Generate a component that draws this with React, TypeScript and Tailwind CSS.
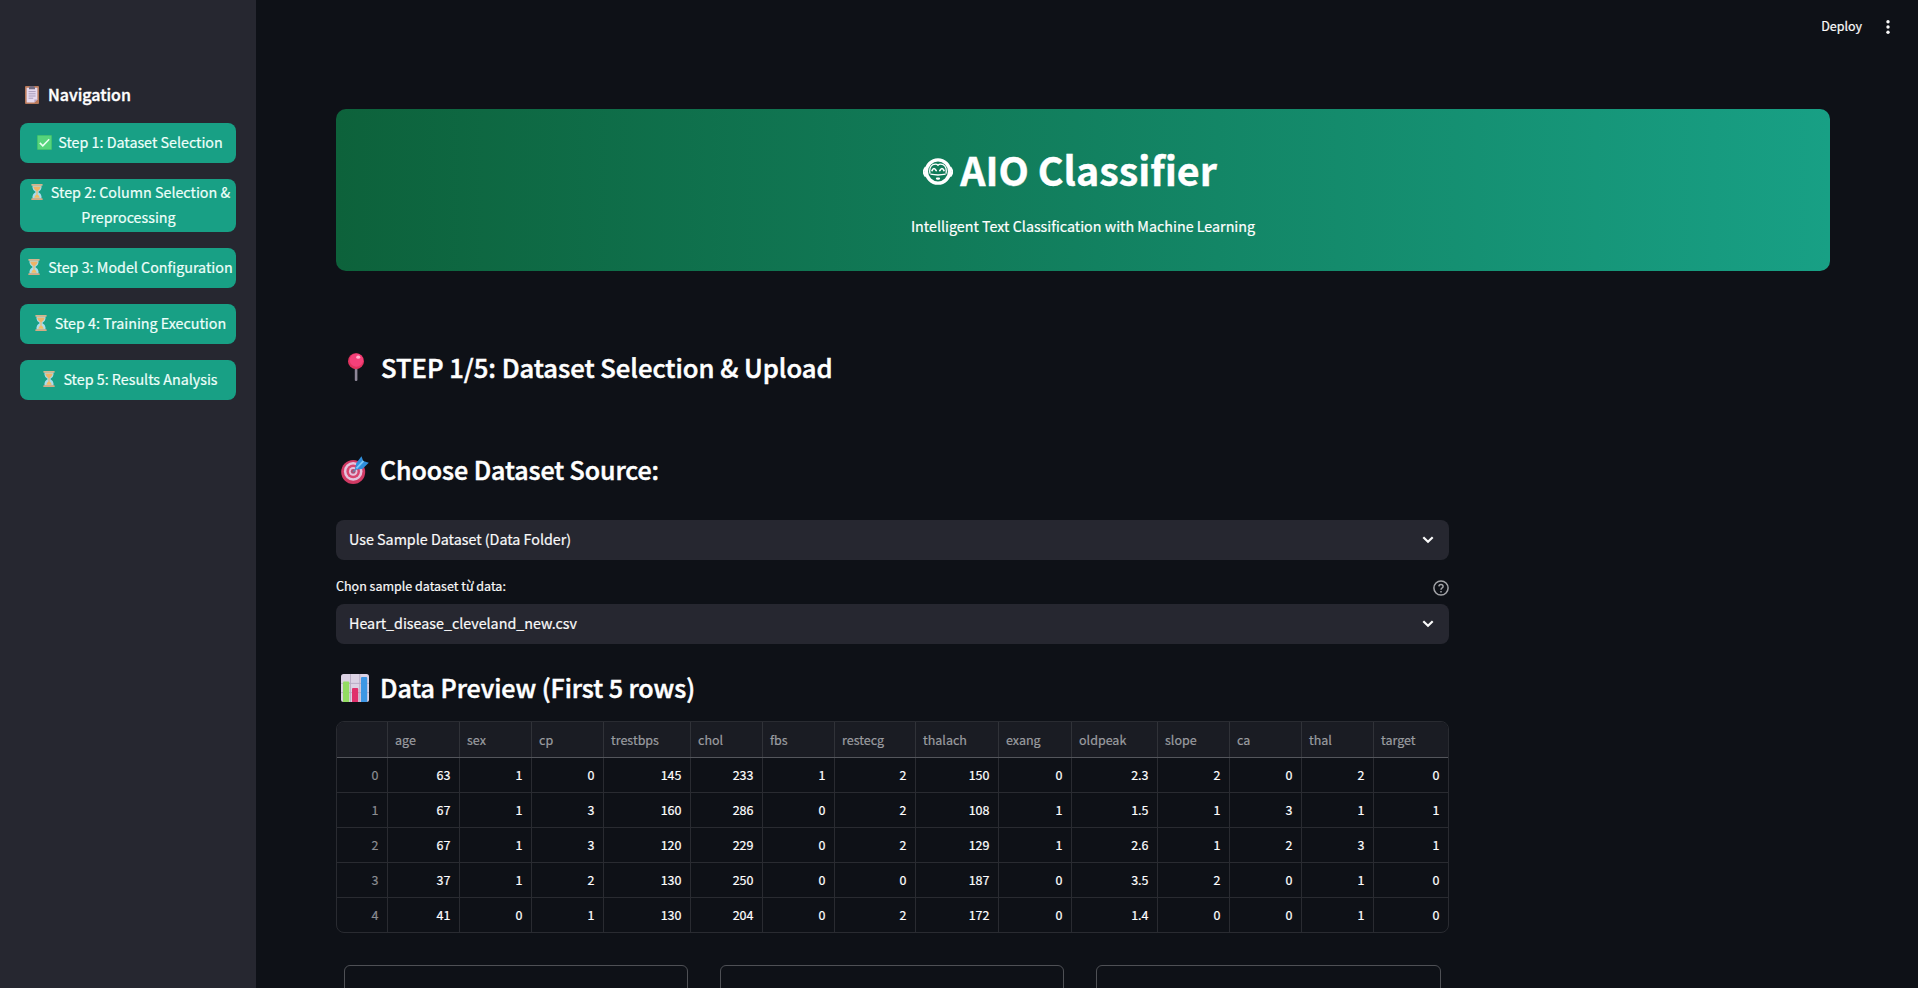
import type { ReactNode } from "react";

function Clipboard({ className }: { className: string }) {
  return (
    <svg viewBox="0 0 14 18" className={className}>
      <rect width="14" height="18" rx="1" fill="#b8795a" />
      <path d="M1.6 1.8h10.8v11.7l-3 3H1.6z" fill="#e6d9ee" />
      <path d="M9.4 16.5v-3h3z" fill="#b9a3c8" />
      <path d="M4 1.2Q4.4 0 7 0t3 1.2V3.2H4z" fill="#6f6a80" />
      <path d="M3.6 5.6h7M3.6 7.8h7M3.6 10h7M3.6 12.2h4.6" stroke="#a294b5" strokeWidth=".9" />
    </svg>
  );
}

function Check() {
  return (
    <svg viewBox="0 0 16 16" className="h-[15px] w-[15px]">
      <rect width="16" height="16" rx="1" fill="#3fbf6f" />
      <rect x="1" y="1" width="14" height="14" fill="#56d47c" />
      <path d="M3 8.4l3.2 3.2L13 4.6" fill="none" stroke="#e9fff2" strokeWidth="1.6" />
    </svg>
  );
}

function Hourglass() {
  return (
    <svg viewBox="0 0 12 16" className="h-4 w-3">
      <path d="M1.5 1.2h9v2.6Q10.5 6 7.3 8q3.2 2 3.2 4.2v2.6h-9v-2.6Q1.5 10 4.7 8 1.5 6 1.5 3.8z" fill="#a9dcec" />
      <path d="M2.2 2.4h7.6Q9.4 5.6 6 7.3 2.6 5.6 2.2 2.4z" fill="#eeb468" />
      <path d="M6 7v4" stroke="#f2b25c" strokeWidth="1" />
      <path d="M3.2 13.8Q3.8 11 6 10.6q2.2.4 2.8 3.2z" fill="#f4bd63" />
      <rect x=".3" y="0" width="11.4" height="1.7" rx=".6" fill="#d6b48c" />
      <rect x=".3" y="14.3" width="11.4" height="1.7" rx=".6" fill="#d6a983" />
    </svg>
  );
}

function Pin() {
  return (
    <svg viewBox="0 0 16 28" className="h-7 w-4">
      <rect x="6.8" y="14" width="2.6" height="14" rx="1" fill="#8e8798" />
      <circle cx="8" cy="8.2" r="8" fill="#e2335f" />
      <circle cx="8.4" cy="7.2" r="6.6" fill="#f5407a" />
      <ellipse cx="10.2" cy="4.2" rx="2" ry="1.6" fill="#ffb3cd" />
    </svg>
  );
}

function Target() {
  return (
    <svg viewBox="0 0 28 28" className="h-7 w-7">
      <circle cx="12.2" cy="16" r="12" fill="#d13a64" />
      <circle cx="12.2" cy="15.4" r="9.3" fill="#e4c3dd" />
      <circle cx="12.2" cy="15.4" r="6.8" fill="#d8456f" />
      <circle cx="12.2" cy="15.4" r="4.3" fill="#e4c3dd" />
      <circle cx="12.2" cy="15.4" r="2.4" fill="#b3496f" />
      <path d="M12 16l9-9" stroke="#6a7fa6" strokeWidth="1.6" />
      <path d="M14 13.5l1.2-6.2L20.5.3l1.7 4.8 5.6 1.6-6.5 6.3z" fill="#2f8fdc" />
      <path d="M15.5 12.3l7-7.4" stroke="#7cc8f7" strokeWidth="1.8" />
    </svg>
  );
}

function BarChart() {
  return (
    <svg viewBox="0 0 28 28" className="h-7 w-7">
      <rect width="28" height="28" rx="2.5" fill="#dcd2e4" />
      <path d="M9.5 0v28M18.8 0v28M0 9.4h28M0 18.6h28" stroke="#b6a9c2" strokeWidth=".9" />
      <path d="M2 8.5q0-1 1-1h4.2q1 0 1 1V28H2.5q-.5 0-.5-.5z" fill="#93dc62" />
      <path d="M11 15q0-1 1-1h4.2q1 0 1 1v13H11z" fill="#e0316c" />
      <path d="M20 4q0-1 1-1h4.2q1 0 1 1v23.5q0 .5-.5.5H20z" fill="#3e97e4" />
    </svg>
  );
}

function Face() {
  return (
    <svg viewBox="0 0 30 27" className="h-[27px] w-[30px]" fill="none" stroke="#fff">
      <circle cx="15" cy="13.5" r="11.6" strokeWidth="3.4" />
      <path d="M2.8 9Q.8 11.5.8 13.8t2 4.7M27.2 9q2 2.5 2 4.8t-2 4.7" strokeWidth="2" />
      <path d="M7 15.6Q5.8 9 9.8 6.7q3.600-1.300 5.200.5 1.600-1.800 5.200-.5Q24.200 9 23 15.600" strokeWidth="1.3" />
      <path d="M9 12.6q1.900-4.200 4.200 0M16.800 12.600q2.300-4.200 4.200 0" strokeWidth="1.7" strokeLinecap="round" />
      <path d="M7.4 16.2q7.600 1.600 15.200 0" strokeWidth="1.3" />
      <path d="M14 20.6h2" strokeWidth="2.2" strokeLinecap="round" />
    </svg>
  );
}

function Chevron() {
  return (
    <svg viewBox="0 0 12 8" className="h-2 w-3" fill="none" stroke="#fafafa" strokeWidth="2.2">
      <path d="M1.3 1.2L6 5.8l4.7-4.6" />
    </svg>
  );
}

function NavButton({ done, children }: { done?: boolean; children: ReactNode }) {
  return (
    <button className="flex min-h-10 w-[216px] items-center justify-center rounded-lg bg-[#18a085] text-[14.3px] leading-[25.6px] whitespace-nowrap text-[#eefffa]">
      <span className="mb-[2px] block pl-px text-center">
        <span className="mr-[4px] inline-flex h-4 w-5 items-center justify-center align-[-2px]">
          {done ? <Check /> : <Hourglass />}
        </span>
        {children}
      </span>
    </button>
  );
}

function Heading({ icon, className, children }: { icon: ReactNode; className: string; children: ReactNode }) {
  return (
    <h2 className={"flex h-9 items-center font-medium text-white [-webkit-text-stroke:0.5px_white] " + className}>
      <span className="mr-[6px] flex w-[38px] items-center justify-center">{icon}</span>
      {children}
    </h2>
  );
}

function Select({ children }: { children: ReactNode }) {
  return (
    <div className="flex h-10 items-center justify-between rounded-lg bg-[#262730] pr-[15px] pl-[13px] text-[14.3px] text-[#fafafa]">
      <span className="pb-[2px]">{children}</span>
      <Chevron />
    </div>
  );
}

const columns = ["", "age", "sex", "cp", "trestbps", "chol", "fbs", "restecg", "thalach", "exang", "oldpeak", "slope", "ca", "thal", "target"];

const rows = [
  ["0", "63", "1", "0", "145", "233", "1", "2", "150", "0", "2.3", "2", "0", "2", "0"],
  ["1", "67", "1", "3", "160", "286", "0", "2", "108", "1", "1.5", "1", "3", "1", "1"],
  ["2", "67", "1", "3", "120", "229", "0", "2", "129", "1", "2.6", "1", "2", "3", "1"],
  ["3", "37", "1", "2", "130", "250", "0", "0", "187", "0", "3.5", "2", "0", "1", "0"],
  ["4", "41", "0", "1", "130", "204", "0", "2", "172", "0", "1.4", "0", "0", "1", "0"],
];

const gridCols = "grid grid-cols-[51px_72px_72px_72px_87px_72px_72px_81px_83px_73px_86px_72px_72px_72px_74px]";

function DataTable() {
  return (
    <div className="w-[1113px] overflow-hidden rounded-lg border border-[#292b31] text-[12.5px]">
      <div className={gridCols + " h-9 border-b border-[#54565c] bg-[#1a1c23] text-[#9b9ca0]"}>
        {columns.map((name, i) => (
          <div key={i} className="flex items-center border-r border-[#303238] pt-[2px] pl-[7px] last:border-r-0">
            {name}
          </div>
        ))}
      </div>
      {rows.map((row) => (
        <div key={row[0]} className={gridCols + " h-[35px] border-b border-[#292b31] text-white last:h-[34px] last:border-b-0"}>
          {row.map((value, i) => (
            <div
              key={i}
              className="flex items-center justify-end border-r border-[#292b31] pt-px pr-[8.5px] first:text-[#8b8d92] last:border-r-0"
            >
              {value}
            </div>
          ))}
        </div>
      ))}
    </div>
  );
}

export default function App() {
  return (
    <div className="flex h-[988px] overflow-hidden bg-[#0e1117] font-['Noto_Sans_CJK_SC',sans-serif] text-[#fafafa] [-webkit-text-stroke:0.2px_currentcolor]">
      <aside className="flex w-64 shrink-0 flex-col gap-4 bg-[#262730] pt-[82px] pl-5">
        <h3 className="-mb-px flex h-[26px] items-center text-[16px] font-medium text-white [-webkit-text-stroke:0.4px_white]">
          <span className="mr-1 flex w-6 justify-center">
            <Clipboard className="h-[18px] w-[14px]" />
          </span>
          <span className="pb-[2px]">Navigation</span>
        </h3>
        <NavButton done>Step 1: Dataset Selection</NavButton>
        <NavButton>
          Step 2: Column Selection &amp;
          <span className="-mt-px mb-px block">Preprocessing</span>
        </NavButton>
        <NavButton>Step 3: Model Configuration</NavButton>
        <NavButton>Step 4: Training Execution</NavButton>
        <NavButton>Step 5: Results Analysis</NavButton>
      </aside>

      <div className="flex grow flex-col">
        <header className="flex h-[54px] shrink-0 items-center justify-end gap-[23px] pr-[27px] text-[12.5px]">
          <span className="pb-[2px]">Deploy</span>
          <svg viewBox="0 0 6 16" className="h-4 w-[6px]" fill="#fafafa">
            <circle cx="3" cy="2.7" r="1.7" />
            <circle cx="3" cy="8" r="1.7" />
            <circle cx="3" cy="13.3" r="1.7" />
          </svg>
        </header>

        <main className="flex flex-col pt-[55px] pl-20">
          <section className="flex h-[162px] w-[1494px] flex-col items-center rounded-[10px] bg-linear-to-r from-[#0d623b] to-[#18a085] pt-[31px] text-white">
            <h1 className="mr-[26px] flex h-[58px] items-center gap-[7px] text-[39.4px] font-bold [-webkit-text-stroke:0.4px_white]">
              <span className="pt-[5px]"><Face /></span>
              AIO Classifier
            </h1>
            <p className="mt-4 flex h-6 items-center text-[14.3px]">Intelligent Text Classification with Machine Learning</p>
          </section>

          <Heading icon={<Pin />} className="mt-[78px] pl-px text-[25.6px] tracking-[-0.02px]">STEP 1/5: Dataset Selection &amp; Upload</Heading>
          <Heading icon={<Target />} className="mt-[67px] text-[25px] tracking-[-0.07px]">Choose Dataset Source:</Heading>

          <div className="mt-[32px] w-[1113px]">
            <Select>Use Sample Dataset (Data Folder)</Select>
            <div className="mt-4 flex h-7 justify-between text-[12.5px]">
              <span className="leading-[20px]">Chọn sample dataset từ data:</span>
              <svg viewBox="0 0 16 16" className="mt-1 h-4 w-4" fill="none" stroke="#a3a4a8" strokeWidth="1.5">
                <circle cx="8" cy="8" r="7.1" />
                <path d="M5.9 6.4Q6 4.4 8 4.4t2.1 1.9Q10.1 7.5 8.9 8.1 8 8.6 8 9.7" />
                <path d="M8 11v1.5" />
              </svg>
            </div>
            <Select>Heart_disease_cleveland_new.csv</Select>
          </div>

          <Heading icon={<BarChart />} className="mt-[26px] mb-[15px] text-[25px] tracking-[-0.05px]">Data Preview (First 5 rows)</Heading>
          <DataTable />

          <div className="mt-8 ml-2 flex gap-8">
            <div className="h-24 w-[344px] rounded-md border border-[#4e5055]" />
            <div className="h-24 w-[344px] rounded-md border border-[#4e5055]" />
            <div className="h-24 w-[345px] rounded-md border border-[#4e5055]" />
          </div>
        </main>
      </div>
    </div>
  );
}
